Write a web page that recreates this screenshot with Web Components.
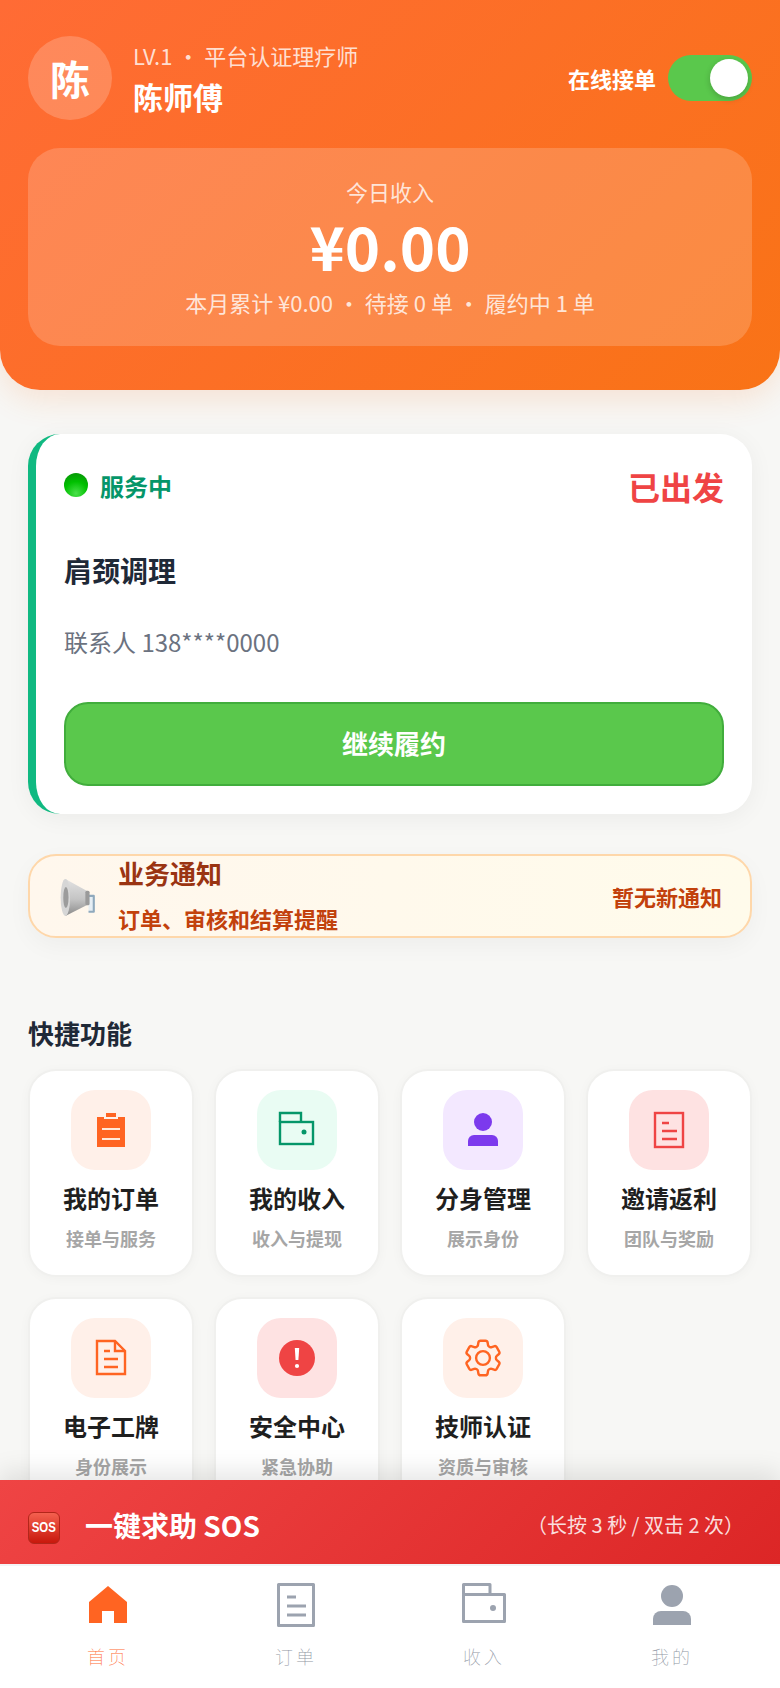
<!DOCTYPE html>
<html>
<head>
<meta charset="utf-8">
<title>技师工作台</title>
<style>
  html, body { margin: 0; height: 100%; }
  body {
    width: 780px; height: 1688px; overflow: hidden;
    display: flex; flex-direction: column;
    background: #f7f7f5; color: #1f2937;
    font-family: "Noto Sans CJK SC", "Noto Sans", sans-serif;
  }
</style>
</head>
<body>
<tech-header name="陈师傅" level="LV.1 ・ 平台认证理疗师" initial="陈"></tech-header>

<page-body>
  <service-card status="服务中" state="已出发" title="肩颈调理" contact="联系人 138****0000" action="继续履约"></service-card>
  <notice-bar title="业务通知" desc="订单、审核和结算提醒" note="暂无新通知"></notice-bar>
  <quick-grid title="快捷功能">
    <quick-item title="我的订单" sub="接单与服务" bg="#fff0e9">
      <svg width="40" height="40" viewBox="0 0 40 40" fill="#ff6422"><path d="M6 7H13V9H27V7H34V37H6Z"/><rect x="15" y="3" width="10" height="4"/><path d="M11 19H29M11 29H29" stroke="#ffe9dc" stroke-width="2"/></svg>
    </quick-item>
    <quick-item title="我的收入" sub="收入与提现" bg="#e9fcf3">
      <svg width="40" height="40" viewBox="0 0 40 40" fill="none" stroke="#059669" stroke-width="2.4"><rect x="3" y="12" width="33" height="22"/><path d="M3 12V3H24V12"/><circle cx="27" cy="22" r="2.5" fill="#059669" stroke="none"/></svg>
    </quick-item>
    <quick-item title="分身管理" sub="展示身份" bg="#f3e8ff">
      <svg width="40" height="40" viewBox="0 0 40 40" fill="#7c3aed"><circle cx="20" cy="12" r="9"/><path d="M5 36V31a6 6 0 0 1 6-6H29a6 6 0 0 1 6 6V36Z"/></svg>
    </quick-item>
    <quick-item title="邀请返利" sub="团队与奖励" bg="#fee2e2">
      <svg width="40" height="40" viewBox="0 0 40 40" fill="none" stroke="#ef4444" stroke-width="2.4"><rect x="6" y="3" width="28" height="34"/><path d="M13 13H20M13 21H28M13 29H28"/></svg>
    </quick-item>
    <quick-item title="电子工牌" sub="身份展示" bg="#fff0e9">
      <svg width="40" height="40" viewBox="0 0 40 40" fill="none" stroke="#ff6422" stroke-width="2.4"><path d="M6 3H24L34 13V36H6Z"/><path d="M24 3V13H34M13 13H19M13 21H27M13 29H27"/></svg>
    </quick-item>
    <quick-item title="安全中心" sub="紧急协助" bg="#fee2e2">
      <svg width="40" height="40" viewBox="0 0 40 40"><circle cx="20" cy="20" r="18" fill="#ef4444"/><path d="M17.8 10h4.4l-.8 12h-2.8Z" fill="#fff"/><circle cx="20" cy="28" r="2.1" fill="#fff"/></svg>
    </quick-item>
    <quick-item title="技师认证" sub="资质与审核" bg="#fff0e9">
      <svg width="46" height="46" viewBox="0 0 24 24" fill="none" stroke="#ff6422" stroke-width="1.25" stroke-linejoin="round"><path d="M9.594 3.94c.09-.542.56-.94 1.11-.94h2.593c.55 0 1.02.398 1.11.94l.213 1.281c.063.374.313.686.645.87.074.04.147.083.22.127.325.196.72.257 1.075.124l1.217-.456a1.125 1.125 0 0 1 1.37.49l1.296 2.247a1.125 1.125 0 0 1-.26 1.431l-1.003.827c-.293.241-.438.613-.43.992a7.723 7.723 0 0 1 0 .255c-.008.378.137.75.43.991l1.004.827c.424.35.534.955.26 1.43l-1.298 2.247a1.125 1.125 0 0 1-1.369.491l-1.217-.456c-.355-.133-.75-.072-1.076.124a6.47 6.47 0 0 1-.22.128c-.331.183-.581.495-.644.869l-.213 1.281c-.09.543-.56.94-1.11.94h-2.594c-.55 0-1.019-.398-1.11-.94l-.213-1.281c-.062-.374-.312-.686-.644-.87a6.52 6.52 0 0 1-.22-.127c-.325-.196-.72-.257-1.076-.124l-1.217.456a1.125 1.125 0 0 1-1.369-.49l-1.297-2.247a1.125 1.125 0 0 1 .26-1.431l1.004-.827c.292-.24.437-.613.43-.991a6.932 6.932 0 0 1 0-.255c.007-.38-.138-.751-.43-.992l-1.004-.827a1.125 1.125 0 0 1-.26-1.43l1.297-2.247a1.125 1.125 0 0 1 1.37-.491l1.216.456c.356.133.751.072 1.076-.124.072-.044.146-.086.22-.128.332-.183.582-.495.644-.869l.214-1.28Z"/><circle cx="12" cy="12" r="3.6"/></svg>
    </quick-item>
  </quick-grid>
</page-body>

<sos-bar label="一键求助 SOS" hint="（长按 3 秒 / 双击 2 次）"></sos-bar>

<tab-bar>
  <tab-item label="首页" active>
    <svg width="48" height="48" viewBox="0 0 48 48" fill="#ff6422"><path d="M24 5L43 21V42H30V30H18V42H5V21Z"/></svg>
  </tab-item>
  <tab-item label="订单">
    <svg width="48" height="48" viewBox="0 0 48 48" fill="none" stroke="#9ca3af" stroke-width="3"><rect x="6.5" y="3.5" width="35" height="41" stroke-linejoin="round"/><path d="M15 16H24M15 25H34M15 34H34"/></svg>
  </tab-item>
  <tab-item label="收入">
    <svg width="48" height="48" viewBox="0 0 48 48" fill="none" stroke="#9ca3af" stroke-width="3" stroke-linejoin="round"><rect x="3.5" y="13.5" width="41" height="27"/><path d="M3.5 13.5V3.5H30V13.5"/><circle cx="33" cy="27" r="3" fill="#9ca3af" stroke="none"/></svg>
  </tab-item>
  <tab-item label="我的">
    <svg width="48" height="48" viewBox="0 0 48 48" fill="#9ca3af"><circle cx="24" cy="15" r="11"/><path d="M5 44V38a8 8 0 0 1 8-8H35a8 8 0 0 1 8 8V44Z"/></svg>
  </tab-item>
</tab-bar>

<script>
// small helper so every component sets up its shadow root the same way
class Base extends HTMLElement {
    render(html) {
        if (!this.shadowRoot) this.attachShadow({ mode: "open" });
        this.shadowRoot.innerHTML = html;
    }
    attr(name) { return this.getAttribute(name) || ""; }
}

class TechHeader extends Base {
    connectedCallback() {
        this.render(`
      <style>
        :host { display:block; flex:none; position:relative; z-index:1; height:390px; box-sizing:border-box;
                padding:36px 28px 44px; color:#fff; border-radius:0 0 40px 40px;
                background:linear-gradient(135deg,#ff6b35,#f97316);
                box-shadow:0 8px 32px rgba(249,115,22,.16); }
        .top { display:flex; align-items:center; height:84px; }
        .avatar { width:84px; height:84px; border-radius:50%; flex:none; display:flex; align-items:center; justify-content:center;
                  background:rgba(255,255,255,.2); font-size:40px; font-weight:700; }
        .who { margin-left:21px; flex:1; }
        .level { font-size:22px; line-height:34px; color:rgba(255,255,255,.8); }
        .name { font-size:30px; line-height:44px; font-weight:700; margin-top:2px; }
        .online { font-size:22px; font-weight:700; margin-right:12px; }
        .switch { width:84px; height:46px; border-radius:23px; background:#5ac84c; display:flex; justify-content:flex-end; align-items:center; padding-right:4px; box-sizing:border-box; }
        .knob { width:38px; height:38px; border-radius:50%; background:#fff; box-shadow:0 2px 6px rgba(0,0,0,.2); }
      </style>
      <div class="top">
        <div class="avatar">${this.attr("initial")}</div>
        <div class="who">
          <div class="level">${this.attr("level")}</div>
          <div class="name">${this.attr("name")}</div>
        </div>
        <div class="online">在线接单</div>
        <div class="switch"><div class="knob"></div></div>
      </div>
      <income-card label="今日收入" amount="¥0.00" sub="本月累计 ¥0.00 ・ 待接 0 单 ・ 履约中 1 单"></income-card>`);
    }
}

class IncomeCard extends Base {
    connectedCallback() {
        this.render(`
      <style>
        :host { display:block; margin-top:28px; height:198px; box-sizing:border-box; padding-top:26px; text-align:center;
                border-radius:32px; background:rgba(255,255,255,.18); }
        .label { font-size:22px; line-height:34px; color:rgba(255,255,255,.8); }
        .amount { font-size:60px; line-height:74px; margin-bottom:4px; font-weight:700; }
        .sub { font-size:22px; line-height:32px; color:rgba(255,255,255,.8); }
      </style>
      <div class="label">${this.attr("label")}</div>
      <div class="amount">${this.attr("amount")}</div>
      <div class="sub">${this.attr("sub")}</div>`);
    }
}

class PageBody extends Base {
    connectedCallback() {
        this.render(`
      <style>
        :host { display:block; flex:1; min-height:0; overflow:hidden; padding:44px 28px 0; }
      </style>
      <slot></slot>`);
    }
}

class ServiceCard extends Base {
    connectedCallback() {
        this.render(`
      <style>
        :host { display:block; height:380px; box-sizing:border-box; padding:29px 28px 28px 28px; background:#fff;
                border-left:8px solid #10b981; border-radius:32px; box-shadow:0 4px 24px rgba(0,0,0,.05); }
        .head { display:flex; align-items:center; justify-content:space-between; height:44px; }
        .status { display:flex; align-items:center; gap:12px; font-size:24px; font-weight:700; color:#059669; }
        .dot { width:24px; height:24px; border-radius:50%; background:radial-gradient(circle at 50% 85%,#4be04b 0,#00c000 50%,#0a8a0a 100%); }
        .state { font-size:32px; font-weight:700; color:#ef4444; margin-top:2px; }
        .title { margin-top:43px; font-size:28px; line-height:40px; font-weight:700; color:#1f2937; }
        .contact { margin-top:34px; font-size:24px; line-height:36px; color:#6b7280; }
        .btn { margin-top:42px; height:84px; box-sizing:border-box; display:flex; align-items:center; justify-content:center; padding-bottom:3px;
               background:#5ac84c; border:2px solid #41ad3c; border-radius:24px; color:#fff; font-size:26px; font-weight:700; }
      </style>
      <div class="head">
        <div class="status"><span class="dot"></span>${this.attr("status")}</div>
        <div class="state">${this.attr("state")}</div>
      </div>
      <div class="title">${this.attr("title")}</div>
      <div class="contact">${this.attr("contact")}</div>
      <div class="btn">${this.attr("action")}</div>`);
    }
}

class NoticeBar extends Base {
    connectedCallback() {
        this.render(`
      <style>
        :host { display:flex; align-items:center; margin-top:40px; height:84px; box-sizing:border-box; padding:0 28px;
                border:2px solid #fed7aa; border-radius:28px; background:linear-gradient(90deg,#fff7ed,#fffbeb);
                box-shadow:0 8px 24px rgba(0,0,0,.04); }
        .icon { width:60px; height:40px; margin-top:3px; flex:none; }
        .text { flex:1; margin-bottom:5px; }
        .title { font-size:26px; line-height:38px; font-weight:700; color:#9a3412; }
        .desc { font-size:22px; line-height:32px; margin-top:10px; font-weight:700; color:#c2410c; }
        .note { font-size:22px; font-weight:700; color:#c2410c; }
      </style>
      <div class="icon">
        <svg width="40" height="40" viewBox="0 0 38 38">
          <defs>
            <linearGradient id="cone" x1="0" y1="0" x2="0" y2="1"><stop offset="0" stop-color="#e2e2e2"/><stop offset=".55" stop-color="#c4c4c4"/><stop offset="1" stop-color="#8a8a8a"/></linearGradient>
          </defs>
          <path d="M29 17h5v15h-5" fill="#e6eef4" stroke="#8fa9bd" stroke-width="2" stroke-linejoin="round"/>
          <path d="M7 1L29 13V25L7 36Z" fill="url(#cone)"/>
          <rect x="26" y="12" width="4" height="14" rx="1.5" fill="#9a9a9a"/>
          <ellipse cx="7" cy="18.5" rx="4.5" ry="17.5" fill="#d6d6d6"/>
          <ellipse cx="7.5" cy="18.5" rx="2.5" ry="10" fill="#9c9c9c"/>
        </svg>
      </div>
      <div class="text">
        <div class="title">${this.attr("title")}</div>
        <div class="desc">${this.attr("desc")}</div>
      </div>
      <div class="note">${this.attr("note")}</div>`);
    }
}

class QuickGrid extends Base {
    connectedCallback() {
        this.render(`
      <style>
        :host { display:block; margin-top:77px; }
        h2 { margin:0 0 18px; font-size:26px; line-height:36px; font-weight:700; color:#1f2937; }
        .grid { display:grid; grid-template-columns:repeat(4,1fr); gap:20px; }
      </style>
      <h2>${this.attr("title")}</h2>
      <div class="grid"><slot></slot></div>`);
    }
}

class QuickItem extends Base {
    connectedCallback() {
        this.render(`
      <style>
        :host { display:flex; flex-direction:column; align-items:center; box-sizing:border-box; height:208px; padding-top:19px;
                background:#fff; border:2px solid #f0f0ee; border-radius:28px; box-shadow:0 2px 12px rgba(0,0,0,.03); }
        .icon { width:80px; height:80px; border-radius:24px; display:flex; align-items:center; justify-content:center; background:${this.attr("bg")}; }
        .title { margin-top:11px; font-size:24px; line-height:34px; font-weight:700; color:#1f1f1f; }
        .sub { margin-top:8px; font-size:18px; line-height:30px; font-weight:700; color:#a6a6a6; }
      </style>
      <div class="icon"><slot></slot></div>
      <div class="title">${this.attr("title")}</div>
      <div class="sub">${this.attr("sub")}</div>`);
    }
}

class SosBar extends Base {
    connectedCallback() {
        this.render(`
      <style>
        :host { display:flex; flex:none; align-items:center; position:relative; z-index:2; height:84px; box-sizing:border-box; padding:5px 36px 0 28px; color:#fff;
                background:linear-gradient(135deg,#ef4444,#dc2626); box-shadow:0 -8px 24px rgba(0,0,0,.1); }
        .icon { width:32px; height:32px; flex:none; box-sizing:border-box; margin-top:6px; display:flex; align-items:center; justify-content:center;
                border:1px solid #b3261a; border-radius:6px; background:linear-gradient(180deg,#f4604f,#c8180c);
                font:700 13px/1 "Liberation Sans",sans-serif; }
        .icon span { transform:scale(.88,1.1); }
        .label { margin-left:25px; flex:1; font-size:28px; font-weight:700; }
        .hint { font-size:20px; color:rgba(255,255,255,.85); }
      </style>
      <span class="icon"><span>SOS</span></span>
      <span class="label">${this.attr("label")}</span>
      <span class="hint">${this.attr("hint")}</span>`);
    }
}

class TabBar extends Base {
    connectedCallback() {
        this.render(`
      <style>
        :host { display:grid; flex:none; position:relative; z-index:2; grid-template-columns:repeat(4,1fr); height:124px; box-sizing:border-box;
                padding:0 14px; background:#fff; border-top:2px solid #f3f4f6; }
      </style>
      <slot></slot>`);
    }
}

class TabItem extends Base {
    connectedCallback() {
        const color = this.hasAttribute("active") ? "#ff6b35" : "#8f96a3";
        this.render(`
      <style>
        :host { display:flex; flex-direction:column; align-items:center; padding-top:15px; }
        .icon { height:48px; }
        .label { margin-top:13px; font-weight:100; font-size:18px; line-height:28px; letter-spacing:3px; color:${color}; }
      </style>
      <div class="icon"><slot></slot></div>
      <div class="label">${this.attr("label")}</div>`);
    }
}

customElements.define("tech-header", TechHeader);
customElements.define("income-card", IncomeCard);
customElements.define("page-body", PageBody);
customElements.define("service-card", ServiceCard);
customElements.define("notice-bar", NoticeBar);
customElements.define("quick-grid", QuickGrid);
customElements.define("quick-item", QuickItem);
customElements.define("sos-bar", SosBar);
customElements.define("tab-bar", TabBar);
customElements.define("tab-item", TabItem);
</script>
</body>
</html>
